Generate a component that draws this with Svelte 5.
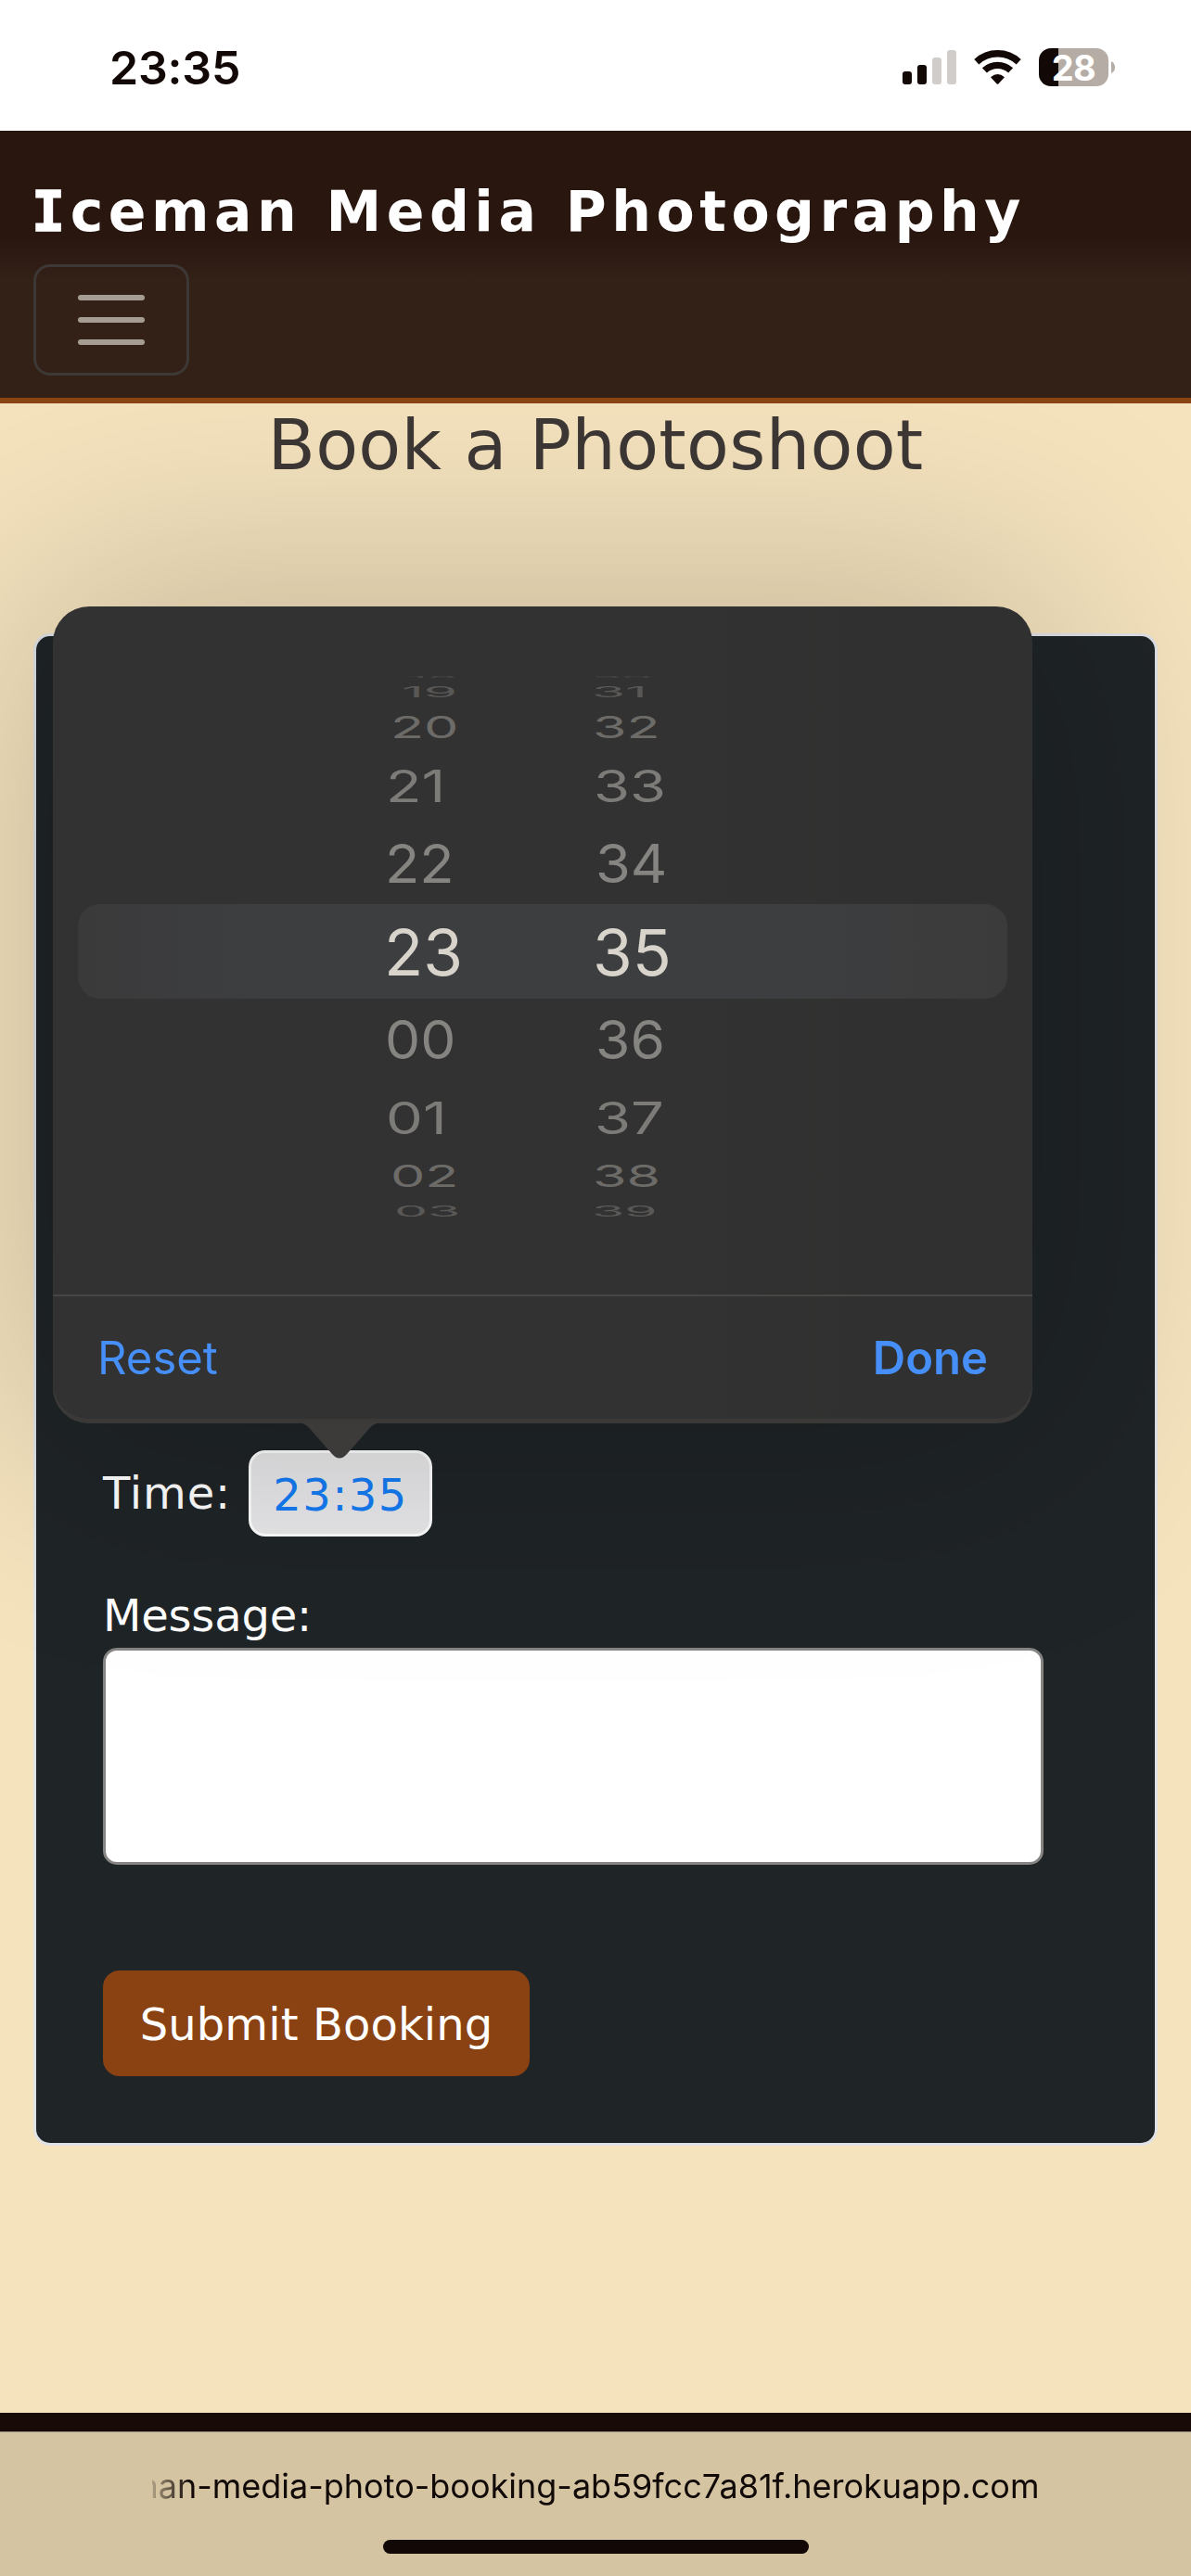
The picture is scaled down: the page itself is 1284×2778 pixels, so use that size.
<script>
  // Rows of the time wheel. h: row height, sx/sy: glyph foreshortening,
  // lx/rx: horizontal start of the hour and minute.
  const rows = [
    { hour: '18', minute: '30', h: 5, sx: 0.78, sy: 0.03, lx: 24, rx: -1, tone: 'edge' },
    { hour: '19', minute: '31', h: 28, sx: 0.86, sy: 0.23, lx: 18, rx: 0, tone: 'rim' },
    { hour: '20', minute: '32', h: 47, sx: 0.87, sy: 0.48, lx: 6, rx: 1, tone: 'far' },
    { hour: '21', minute: '33', h: 80, sx: 0.93, sy: 0.7, lx: 1, rx: 2, tone: 'mid' },
    { hour: '22', minute: '34', h: 88, sx: 0.9, sy: 0.85, lx: 0, rx: 4, tone: 'near' },
    { hour: '23', minute: '35', h: 102, sx: 1.02, sy: 1.02, lx: -1, rx: 1, tone: 'picked' },
    { hour: '00', minute: '36', h: 88, sx: 0.89, sy: 0.85, lx: 0, rx: 4, tone: 'near' },
    { hour: '01', minute: '37', h: 79, sx: 0.93, sy: 0.7, lx: 1, rx: 3, tone: 'mid' },
    { hour: '02', minute: '38', h: 48, sx: 0.87, sy: 0.48, lx: 6, rx: 1, tone: 'far' },
    { hour: '03', minute: '39', h: 27, sx: 0.84, sy: 0.23, lx: 10, rx: 0, tone: 'rim' }
  ];
</script>

<div class="screen">
  <header class="status">
    <span class="clock">23:35</span>
    <div class="indicators">
      <svg class="signal" viewBox="0 0 58 37" width="58" height="37">
        <rect x="0" y="23" width="10" height="14" rx="3" fill="#120805" />
        <rect x="16" y="16" width="10" height="21" rx="3" fill="#120805" />
        <rect x="32" y="8" width="10" height="29" rx="3" fill="#d0cdca" />
        <rect x="48" y="0" width="10" height="37" rx="3" fill="#d0cdca" />
      </svg>
      <svg class="wifi" viewBox="0 0 51 37" width="51" height="37">
        <g fill="none" stroke="#120805" stroke-width="7.4">
          <path d="M2.8 12.7A33.3 33.3 0 0 1 48.2 12.7" />
          <path d="M11.4 21.9A20.7 20.7 0 0 1 39.6 21.9" />
        </g>
        <path d="M18 29.2Q25.5 23 33 29.2L26.3 36.4Q25.5 37.2 24.7 36.4Z" fill="#120805" />
      </svg>
      <div class="battery"><span>28</span></div>
      <svg class="nub" viewBox="0 0 4 13" width="4" height="13">
        <path d="M0 0Q4 2 4 6.500T0 13Z" fill="#b5aca5" />
      </svg>
    </div>
  </header>

  <nav class="nav">
    <div class="brand"><span class="slab">I</span>ceman Media Photography</div>
    <button class="toggle" aria-label="Menu"><i></i><i></i><i></i></button>
  </nav>

  <main>
    <h1>Book a Photoshoot</h1>
    <form class="card">
      <div class="time-row">
        <span class="label time">Time:</span>
        <span class="time-input">23:35</span>
      </div>
      <span class="label message">Message:</span>
      <div class="textarea"></div>
      <button class="submit" type="button">Submit Booking</button>
    </form>
  </main>

  <div class="footer-strip"></div>
  <footer class="urlbar">
    <div class="url">man-media-photo-booking-ab59fcc7a81f.herokuapp.com</div>
    <div class="home"></div>
  </footer>

  <div class="popover">
    <div class="wheel">
      {#each rows as r}
        <div class="row {r.tone}" style="height:{r.h}px">
          <span style="transform:translateX({r.lx}px) scale({r.sx},{r.sy})">{r.hour}</span>
          <span style="transform:translateX({r.rx}px) scale({r.sx},{r.sy})">{r.minute}</span>
        </div>
      {/each}
    </div>
    <div class="actions">
      <span>Reset</span>
      <span class="done">Done</span>
    </div>
    <svg class="arrow" viewBox="0 0 92 39" width="92" height="39">
      <path d="M0 0C8 0 12 4 16 9L38 34Q46 43 54 34L76 9C80 4 84 0 92 0Z" fill="#3d3b3a" />
    </svg>
  </div>
</div>

<style>
  :global(body) {
    margin: 0;
  }
  .screen {
    position: relative;
    display: flex;
    flex-direction: column;
    width: 1284px;
    height: 2778px;
    overflow: hidden;
    background: #f5e3be;
    font-family: 'DejaVu Sans', Verdana, sans-serif;
    box-sizing: border-box;
  }
  .screen * {
    box-sizing: border-box;
  }
  .status {
    position: relative;
    z-index: 2;
    display: flex;
    justify-content: space-between;
    height: 141px;
    flex: none;
    padding: 52px 82px 0 118px;
    background: #fff;
    font-family: Inter, sans-serif;
  }
  .clock {
    height: 42px;
    line-height: 42px;
    font-size: 50px;
    font-weight: 600;
    letter-spacing: -0.2px;
    color: #120805;
  }
  .indicators {
    display: flex;
    align-items: center;
    height: 41px;
  }
  .wifi {
    margin: 0 19px;
  }
  .battery {
    display: flex;
    justify-content: center;
    align-items: center;
    width: 75px;
    height: 41px;
    border-radius: 13px;
    background: linear-gradient(90deg, #120805 21px, #b5aca5 21px);
    color: #fff;
    font-size: 38px;
    font-weight: 700;
    letter-spacing: -0.5px;
  }
  .nub {
    margin-left: 3px;
  }
  .nav {
    position: relative;
    z-index: 2;
    flex: none;
    height: 294px;
    padding: 42px 36px 24px;
    background: linear-gradient(#29160f 0 115px, #332118 160px);
    border-bottom: 6px solid #8a4312;
  }
  .brand {
    height: 90px;
    line-height: 90px;
    font-size: 60px;
    font-weight: 700;
    letter-spacing: 5.5px;
    color: #fff;
    white-space: nowrap;
  }
  .slab {
    margin-left: -2px;
    font-family: 'DejaVu Sans Mono', monospace;
    -webkit-text-stroke: 1.5px #fff;
  }
  .toggle {
    display: flex;
    flex-direction: column;
    align-items: center;
    justify-content: center;
    gap: 18px;
    width: 168px;
    height: 120px;
    margin-top: 12px;
    padding: 0;
    border: 3px solid #3d3835;
    border-radius: 18px;
    background: none;
  }
  .toggle i {
    width: 72px;
    height: 6px;
    border-radius: 3px;
    background: #a59c93;
  }
  main {
    display: flex;
    flex-direction: column;
  }
  h1 {
    margin: 0;
    height: 90px;
    line-height: 90px;
    text-align: center;
    font-size: 75px;
    font-weight: 400;
    letter-spacing: 0.3px;
    color: #3d3835;
  }
  .card {
    display: flex;
    flex-direction: column;
    justify-content: flex-end;
    align-items: flex-start;
    height: 1631px;
    margin: 158px 36px 0;
    padding: 0 72px 72px;
    border: 3px solid #e0e2e6;
    border-radius: 18px;
    background: #1f2427;
  }
  .label {
    font-size: 48px;
    line-height: 60px;
    color: #fff;
  }
  .time-row {
    display: flex;
    align-items: center;
    gap: 18px;
    height: 93px;
  }
  .time {
    width: 139px;
    padding-bottom: 2px;
    letter-spacing: 0.9px;
  }
  .time-input {
    width: 198px;
    height: 93px;
    padding-top: 3px;
    border: 3px solid #fff;
    border-radius: 18px;
    background: #e9e9eb;
    line-height: 84px;
    text-align: center;
    font-size: 48px;
    letter-spacing: 1.4px;
    color: #147cf5;
  }
  .message {
    margin: 55px 0 5px;
    letter-spacing: -0.2px;
  }
  .textarea {
    width: 1014px;
    height: 234px;
    border: 3px solid #868583;
    border-radius: 15px;
    background: #fff;
  }
  .submit {
    width: 460px;
    height: 114px;
    margin-top: 114px;
    padding: 1px 0 0;
    border: 0;
    border-radius: 18px;
    background: #8a4212;
    font: 48px 'DejaVu Sans', sans-serif;
    letter-spacing: 0.1px;
    color: #fff;
    white-space: nowrap;
  }
  .footer-strip {
    height: 21px;
    flex: none;
    margin-top: auto;
    background: #180b07;
    border-bottom: 1px solid #8d847a;
  }
  .urlbar {
    display: flex;
    flex-direction: column;
    align-items: center;
    justify-content: space-between;
    flex: none;
    height: 155px;
    padding: 35px 0 24px;
    background: #d5c4a2;
  }
  .url {
    display: flex;
    justify-content: flex-end;
    width: 957px;
    line-height: 46px;
    font-family: Inter, sans-serif;
    font-size: 36px;
    color: #120a08;
    white-space: nowrap;
    -webkit-mask-image: linear-gradient(90deg, rgba(0, 0, 0, 0.2), #000 40px);
    mask-image: linear-gradient(90deg, rgba(0, 0, 0, 0.2), #000 40px);
  }
  .home {
    width: 459px;
    height: 15px;
    border-radius: 8px;
    background: #120805;
  }
  .popover {
    position: absolute;
    z-index: 1;
    left: 57px;
    top: 654px;
    width: 1056px;
    height: 881px;
    border-radius: 39px;
    background: linear-gradient(90deg, #323232, #333232 65%, #2f302f 90%);
    box-shadow: 0 0 300px 30px rgba(0, 0, 0, 0.2), inset 0 -5px 0 #3a3938;
    font-family: Inter, sans-serif;
  }
  .wheel {
    height: 744px;
    padding: 73px 27px 0;
    border-bottom: 2px solid #464645;
  }
  .row {
    display: grid;
    grid-template-columns: 223px 1fr;
    align-items: center;
    padding-left: 331px;
    border-radius: 24px;
  }
  .row span {
    justify-self: start;
    line-height: 0;
    font-size: 68px;
    transform-origin: left center;
  }
  .picked {
    position: relative;
    background: linear-gradient(90deg, #3a3a3b, #3d3e40 20% 75%, #3b3b3b);
    color: #d8d4cb;
  }
  .near {
    color: #858480;
  }
  .mid {
    color: #7c7b78;
  }
  .far {
    color: #6c6b68;
  }
  .rim {
    color: #595856;
  }
  .edge {
    color: #484746;
  }
  .actions {
    display: flex;
    justify-content: space-between;
    padding: 0 48px;
    line-height: 133px;
    font-size: 49px;
    color: #468ff8;
  }
  .done {
    font-weight: 600;
  }
  .arrow {
    position: absolute;
    left: 263px;
    top: 880px;
  }
</style>
